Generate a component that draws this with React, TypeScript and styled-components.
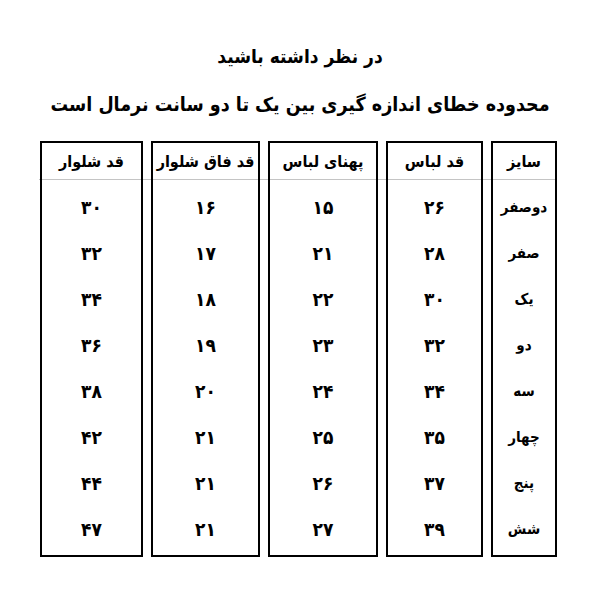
import styled, { createGlobalStyle } from 'styled-components'

const GlobalStyle = createGlobalStyle`
  html, body {
    margin: 0;
    padding: 0;
    background: #ffffff;
  }
  body {
    font-family: 'DejaVu Sans Condensed', 'DejaVu Sans', sans-serif;
    color: #000000;
  }
`

const Page = styled.div`
  width: 600px;
  height: 600px;
  background: #ffffff;
  display: flex;
  flex-direction: column;
  align-items: center;
  box-sizing: border-box;
  padding-top: 44px;
`

const Title = styled.h1<{ $size: number; $gap: number }>`
  margin: 0 0 ${(p) => p.$gap}px 0;
  font-size: ${(p) => p.$size}px;
  line-height: 1.3;
  font-weight: bold;
  text-align: center;
  direction: rtl;
  white-space: nowrap;
`

const Table = styled.div`
  direction: rtl;
  display: flex;
  gap: 8px;
  width: 518px;
  align-self: flex-start;
  margin-left: 39px;
  background-image: linear-gradient(#c4c4c4, #c4c4c4);
  background-repeat: no-repeat;
  background-size: 100% 1px;
  background-position: 0 38px;
`

const Column = styled.div<{ $width: number }>`
  box-sizing: border-box;
  width: ${(p) => p.$width}px;
  border: 2px solid #000000;
  display: flex;
  flex-direction: column;
  padding-bottom: 3px;
`

const HeadCell = styled.div`
  height: 36px;
  border-bottom: 1px solid #c4c4c4;
  display: flex;
  align-items: center;
  justify-content: center;
  font-size: 16px;
  font-weight: bold;
  white-space: nowrap;
`

const Body = styled.div`
  padding-top: 4px;
  display: flex;
  flex-direction: column;
`

const Cell = styled.div<{ $word?: boolean }>`
  height: 46px;
  display: flex;
  align-items: center;
  justify-content: center;
  font-size: ${(p) => (p.$word ? 15 : 19)}px;
  font-weight: bold;
  white-space: nowrap;
`

const toFa = (n: number) =>
  String(n).replace(/\d/g, (d) => '۰۱۲۳۴۵۶۷۸۹'[Number(d)])

const columns: { title: string; width: number; values: (string | number)[] }[] = [
  {
    title: 'سایز',
    width: 66,
    values: ['دوصفر', 'صفر', 'یک', 'دو', 'سه', 'چهار', 'پنج', 'شش'],
  },
  { title: 'قد لباس', width: 97, values: [26, 28, 30, 32, 34, 35, 37, 39] },
  { title: 'پهنای لباس', width: 110, values: [15, 21, 22, 23, 24, 25, 26, 27] },
  { title: 'قد فاق شلوار', width: 109, values: [16, 17, 18, 19, 20, 21, 21, 21] },
  { title: 'قد شلوار', width: 103, values: [30, 32, 34, 36, 38, 42, 44, 47] },
]

export default function App() {
  return (
    <>
      <GlobalStyle />
      <Page>
        <Title $size={19} $gap={23}>در نظر داشته باشید</Title>
        <Title $size={19.5} $gap={24}>محدوده خطای اندازه گیری بین یک تا دو سانت نرمال است</Title>
        <Table>
          {columns.map((col) => (
            <Column key={col.title} $width={col.width}>
              <HeadCell>{col.title}</HeadCell>
              <Body>
                {col.values.map((v, i) => (
                  <Cell key={i} $word={typeof v === 'string'}>
                    {typeof v === 'number' ? toFa(v) : v}
                  </Cell>
                ))}
              </Body>
            </Column>
          ))}
        </Table>
      </Page>
    </>
  )
}
